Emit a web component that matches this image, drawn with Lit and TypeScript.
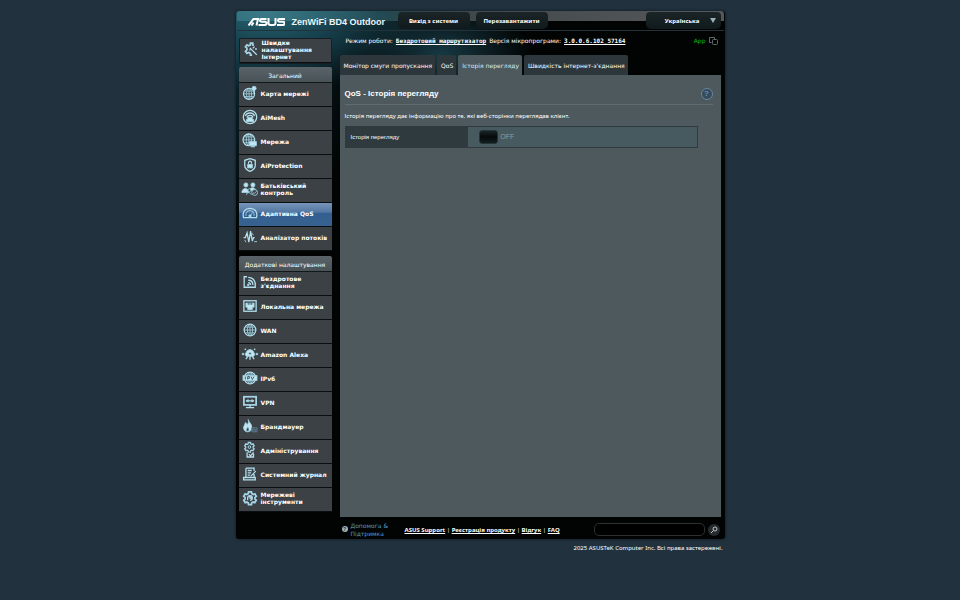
import { LitElement, html, svg, css, nothing } from "lit";
import { customElement, property } from "lit/decorators.js";
import { classMap } from "lit/directives/class-map.js";

const globe = svg`<circle class="thick" cx="12" cy="12" r="10"/><ellipse cx="12" cy="12" rx="4.5" ry="9.5"/><path d="M12 2.5v19M2.5 12h19M4.5 7h15M4.5 17h15"/>`;
const gear = svg`<path d="M9.500 2.500h5l.5 3 2.500 1.400 2.800-1.100 2.500 4.300-2.300 1.900v2.900l2.300 1.900-2.500 4.300-2.800-1.100-2.500 1.400-.5 3h-5l-.5-3L6.500 20l-2.800 1.100-2.500-4.300 2.300-1.900V12L1.200 10.100l2.500-4.300 2.800 1.100L9 5.500z" transform="translate(0 -1)"/>`;

const icons: Record<string, unknown> = {
  wizard: svg`<path class="heavy" d="M17 6l-2-1V2h-4v3L8 6.500 5 5 2.500 8.500 5 10.500v3L2.500 16 5 19.500 8 18l3 1.500v3h3"/><path class="thick" d="M13 13l9 9M10 10l3 3M18 8l-3 3M19 12h3M9 14l2-1"/>`,
  map: svg`<g transform="translate(-1 2) scale(.95)">${globe}</g><circle class="solid" cx="19" cy="4" r="3.500"/><path class="thick" d="M19 5v8"/>`,
  mesh: svg`<circle class="thick" cx="12" cy="12" r="11.500"/><path class="thick" d="M6.500 13a6 6 0 0 1 11 0M4 10a9 9 0 0 1 16 0"/><path class="solid" d="M8 13h8v3h2v4H6v-4h2z"/>`,
  network: svg`<g transform="translate(-2 -2)">${globe}</g><path class="solid" d="M11 13h12v7H11zM14 21h6v1h-6z"/>`,
  shield: svg`<path class="thick" d="M12 1L21 4v9c0 5-4 8-9 10C7 21 3 18 3 13V4z"/><rect class="solid" x="8" y="11" width="8" height="6"/><path class="thick" d="M9.500 10V8a2.500 2.500 0 0 1 5 0v2"/>`,
  family: svg`<circle class="solid" cx="5" cy="5" r="3.500"/><circle class="solid" cx="17" cy="5" r="3.500"/><path class="solid" d="M-2 18c0-9 12-9 12 0zM12 12c3-4 10-2 10 3h-9z"/><circle class="dark" cx="11" cy="14" r="2.500"/><circle class="dark" cx="20" cy="18" r="5"/><path d="M17 18l2 2 4-4M6 22c0-5 8-5 8 0"/>`,
  gauge: svg`<path class="thick" d="M1 20C-2 10 4 4 12 4s14 6 11 16z"/><path d="M5 17C4 11 8 8 12 8s8 3 7 9M12 17l5-6"/><circle class="solid" cx="12" cy="17" r="2"/>`,
  pulse: svg`<path class="thick" d="M1 13h3l3-8 3 16 3-19 3 17 2-6h2"/><path d="M3 17l2 4M15 5l3 4M19 20h5"/>`,
  wifi: svg`<path class="thick" d="M7 3H2v18h19v-6"/><path class="thick" d="M9 4c7 0 12 5 12 12M9 9c5 0 8 3 8 8M9 13c2.500 0 4 1.500 4 4"/><circle class="solid" cx="9" cy="17" r="1.500"/>`,
  port: svg`<rect class="thick" x="1.500" y="3" width="21" height="18"/><path class="solid" d="M5 7h14v7h-3v4H8v-4H5z"/><path class="cut" d="M9 6v4M12 6v4M15 6v4"/>`,
  globe,
  alexa: svg`<path class="solid" d="M6 9c0-6 12-6 12 0 4 2 2 7-1 7H7c-3 0-5-5-1-7z"/><circle class="solid" cx="0" cy="12" r="1.500"/><circle class="solid" cx="24" cy="12" r="1.500"/><path class="thick" d="M5 5L3 3M19 5l2-2M8 16l-3 5M16 16l3 5M12 16v6"/><circle class="dark" cx="12" cy="11" r="2"/>`,
  ipv6: svg`${globe}<rect class="solid" x="0" y="8" width="24" height="8"/><path class="cut" d="M4 9.500v5M8 14.500v-5h3v3H8M14 9.500l2 5 3-5"/>`,
  vpn: svg`<rect class="heavy" x="1.500" y="3" width="21" height="14"/><path class="thick" d="M12 17v4M5 21.500h14M6 10h12"/><path class="solid" d="M5 10l4-2v4zM19 10l-4-2v4z"/>`,
  fire: svg`<path class="solid" d="M9 1c1 5 6 7 6 13 0 5-3 8-7 8s-7-3-7-7c0-4 3-5 3-9 2 1 3 3 3 4 2-2 3-5 2-9z"/><path class="dark" d="M8 13c2 3 3 4 2 8H6c-2-3 1-4 2-8z"/><path class="dim" d="M15 15h9v7h-9zM15 18.500h9M19 15v3.500M17 18.500V22M21 18.500V22"/>`,
  admin: svg`<g transform="translate(2 -2) scale(.75)"><g class="heavy">${gear}</g><circle class="thick" cx="12" cy="12" r="3"/></g><path class="thick" d="M7 16v8h11v-6M10 19l3 3 5-6"/>`,
  log: svg`<path class="thick" d="M5 2h14v5M5 2v15M1 18v4h20v-4zM8 6h7M8 10h6M8 14h4"/><path class="thick" d="M22 7l-9 9M19 12v5"/>`,
  tools: svg`<g class="heavy">${gear}</g><path class="thick" d="M8 16v-4a4 4 0 1 1 4 4M12 9v3h3"/>`,
};

interface Entry { icon: string; label: string; active?: boolean }

const general: Entry[] = [
  { icon: "map", label: "Карта мережі" },
  { icon: "mesh", label: "AiMesh" },
  { icon: "network", label: "Мережа" },
  { icon: "shield", label: "AiProtection" },
  { icon: "family", label: "Батьківський контроль" },
  { icon: "gauge", label: "Адаптивна QoS", active: true },
  { icon: "pulse", label: "Аналізатор потоків" },
];

const advanced: Entry[] = [
  { icon: "wifi", label: "Бездротове з'єднання" },
  { icon: "port", label: "Локальна мережа" },
  { icon: "globe", label: "WAN" },
  { icon: "alexa", label: "Amazon Alexa" },
  { icon: "ipv6", label: "IPv6" },
  { icon: "vpn", label: "VPN" },
  { icon: "fire", label: "Брандмауер" },
  { icon: "admin", label: "Адміністрування" },
  { icon: "log", label: "Системний журнал" },
  { icon: "tools", label: "Мережеві інструменти" },
];

@customElement("nav-item")
class NavItem extends LitElement {
  @property() icon = "";
  @property() label = "";
  @property({ type: Boolean }) active = false;

  static styles = css`
    :host { display: block; }
    .item {
      box-sizing: border-box;
      height: 24px;
      display: flex;
      align-items: center;
      gap: 4px;
      padding: 0 3px 3px 4px;
      border-bottom: 1px solid #0b0e10;
      background: #3b4144;
      color: #fff;
      font: bold 6px/7px "DejaVu Sans", sans-serif;
      text-decoration: none;
    }
    .active { background: linear-gradient(#7794b8, #5377a3 40%, #335f91 45%, #37628f); }
    svg {
      flex: none;
      width: 14px;
      height: 14px;
      overflow: visible;
      fill: none;
      stroke: #9fd2e4;
      stroke-width: 1.5;
    }
    .thick { stroke-width: 2.2; stroke: #b4e0ee; }
    .heavy { stroke-width: 3; stroke: #a4d4e6; }
    .solid { fill: #c2e6f1; }
    .dark { fill: #3b4144; }
    .cut { stroke: #35505e; }
    .dim { stroke: #5c7f90; }
  `;

  render() {
    return html`<a href="#" class=${classMap({ item: true, active: this.active })}
      aria-current=${this.active ? "page" : nothing}>
      <svg viewBox="0 0 24 24" aria-hidden="true">${icons[this.icon]}</svg>
      <span>${this.label}</span>
    </a>`;
  }
}

@customElement("app-root")
class AppRoot extends LitElement {
  static styles = css`
    :host {
      display: block;
      box-sizing: border-box;
      min-height: 100vh;
      padding: 11px 16px;
      background: #21323e;
      color: #fff;
      font: 6px/8px "DejaVu Sans", sans-serif;
    }
    a { color: inherit; }
    button, input, select { font: inherit; color: inherit; margin: 0; }
    .page { max-width: 489px; margin: 0 auto; }
    .frame {
      border-radius: 3px;
      background:
        radial-gradient(ellipse 170px 80px at 30px 0, #2b6574 0, #174350 40%, transparent 100%),
        radial-gradient(ellipse 90px 60px at 205px 44px, #173943, transparent),
        radial-gradient(ellipse 140px 230px at 0 0, #0e2f3b 0, transparent 100%),
        #020404;
      box-shadow: 0 0 3px #0b151b;
      padding: 0 3px;
    }
    .top {
      height: 19px;
      display: flex;
      align-items: flex-start;
      gap: 6px;
      margin: 0 -2px;
      padding: 0 3px 0 11px;
      border-bottom: 1px solid #24333a;
      background: linear-gradient(90deg, #55a0ad66, #447e8a66 30%, #43494c 50%, #55585a) 0 0 / 100% 10px no-repeat;
      border-radius: 3px 3px 0 0;
    }
    .brand {
      flex: none;
      width: 144px;
      display: flex;
      align-items: center;
      gap: 7px;
      padding-top: 5px;
    }
    .logo { width: 37px; height: 8px; fill: none; stroke: #fff; stroke-width: 2; }
    .model { font: bold 9px/12px "Liberation Sans", sans-serif; white-space: nowrap; color: #eef6f8; }
    .pill {
      height: 17px;
      margin-top: 1px;
      border: 0;
      border-radius: 4px 4px 5px 5px;
      background: linear-gradient(#1b2528, #10191c);
      font: bold 6px/16px "Noto Sans", sans-serif;
      padding: 1px 0 0;
      width: 72px;
      text-align: center;
    }
    .lang { position: relative; margin-left: auto; }
    .lang select {
      appearance: none;
      width: 75px;
      padding: 1px 18px 0 16px;
      display: block;
    }
    .lang svg { position: absolute; right: 5px; top: 7px; width: 6px; height: 5px; fill: #9ab0b8; }
    .body { display: grid; grid-template-columns: 93px minmax(0, 1fr); gap: 8px; }
    .side { padding-top: 7px; }
    .quick { border: 1px solid #171e21; border-radius: 1px; margin-bottom: 3px; }
    .group { margin: 0 0 5px; }
    h2 {
      margin: 0;
      height: 16px;
      box-sizing: border-box;
      border-bottom: 1px solid #12181a;
      border-radius: 2px 2px 0 0;
      background: linear-gradient(#5a6468, #495357);
      font: 6px/17px "DejaVu Sans", sans-serif;
      text-align: center;
      white-space: nowrap;
    }
    .main { display: flex; flex-direction: column; }
    .info {
      display: flex;
      align-items: center;
      height: 12px;
      margin-top: 4px;
      padding: 0 4px 0 6px;
      gap: 3px;
      white-space: nowrap;
    }
    .info a { font: bold 6px/8px "DejaVu Sans Mono", monospace; }
    .links a { font-weight: bold; }
    .app { margin-left: auto; color: #16bd16; }
    .info svg { width: 9px; height: 8px; fill: none; stroke: #5d6a6e; }
    .tabs { display: flex; gap: 2px; height: 20px; margin-top: 8px; }
    .tab {
      border: 0;
      border-radius: 2px 2px 0 0;
      padding: 1px 3px 0 4px;
      background: #2d373b;
      font: 6px/19px "DejaVu Sans", sans-serif;
      white-space: nowrap;
    }
    .tab.on { background: #4d595d; color: #d8edf3; }
    .panel {
      flex: 1;
      margin-right: 1px;
      padding: 12px 8px 12px 5px;
      background: #4d595d;
      font: 6px/8px "Liberation Sans", sans-serif;
    }
    .title {
      display: flex;
      align-items: center;
      justify-content: space-between;
      height: 13px;
      padding-bottom: 4px;
      border-bottom: 1px solid #606c70;
    }
    h1 { margin: 0; font: bold 8px/12px "Liberation Sans", sans-serif; }
    .help {
      width: 12px;
      height: 12px;
      padding: 0;
      border: 1px solid #6489a0;
      border-radius: 50%;
      background: #37495a;
      color: #5f90b2;
      font: bold 8px/9px "Liberation Sans", sans-serif;
    }
    .note { margin: 7px 0 5px; height: 9px; font: 6px/9px "Noto Sans", sans-serif; }
    .row {
      display: flex;
      height: 20px;
      border: 1px solid #303a3e;
      margin-right: 15px;
      background: #475a5f;
    }
    .row label {
      flex: 0 0 35%;
      box-sizing: border-box;
      padding-left: 5px;
      line-height: 20px;
      background: #2f3a3e;
    }
    .switch { display: flex; align-items: center; margin-left: 11px; }
    .switch input {
      appearance: none;
      width: 19px;
      height: 14px;
      border: 1px solid #26343a;
      border-radius: 3px;
      background: linear-gradient(#192427, #05090a 50%, #131e21);
    }
    .switch span { font: 7px/14px "Liberation Sans", sans-serif; color: #929da0; padding: 0 2px; }
    .foot { display: flex; align-items: center; height: 22px; padding: 0 2px 0 103px; white-space: nowrap; }
    .q {
      width: 6px; height: 6px; margin: 2px 3px 0 0; border-radius: 50%;
      background: #9fb4bc; color: #10181c; font: bold 5px/6px "Liberation Sans", sans-serif; text-align: center;
    }
    .support { width: 54px; color: #569ac9; line-height: 8px; white-space: normal; padding-top: 4px; }
    .links { padding-top: 4px; font: 6px/8px "Noto Sans", sans-serif; }
    .search { display: flex; align-items: center; gap: 3px; margin: 3px 0 0 auto; }
    .search input {
      box-sizing: border-box; width: 111px; height: 13px; padding: 0 5px;
      border: 1px solid #2c3031; border-radius: 5px; background: #000;
    }
    .search button {
      width: 12px; height: 12px; padding: 2px; border: 0; border-radius: 50%; background: #262b2d;
    }
    .search svg { display: block; width: 8px; height: 8px; fill: none; stroke: #bfc5c7; }
    .copy { margin: 4px 2px 0; text-align: right; font: 6px/10px "Noto Sans", sans-serif; }
  `;

  private items(list: Entry[]) {
    return list.map((e) => html`<nav-item icon=${e.icon} label=${e.label} ?active=${e.active}></nav-item>`);
  }

  render() {
    return html`
      <div class="page">
        <div class="frame">
          <header class="top">
            <div class="brand">
              <svg class="logo" viewBox="0 0 37 8" role="img" aria-label="ASUS">
                <path d="M.5 7.500L5.500 1H10L8.500 7.500M3.500 7.500l2-3M18.500 1h-5c-2 0-2 2.700 0 2.700H17c2 0 2 3.300 0 3.300h-6.500M20.500 0v5c0 1.400.6 2 2 2h3c1.400 0 2-.6 2-2V0M37 1h-5.500c-2 0-2 2.700 0 2.700H35c2 0 2 3.300 0 3.300h-6"/>
              </svg>
              <span class="model">ZenWiFi BD4 Outdoor</span>
            </div>
            <button class="pill">Вихід з системи</button>
            <button class="pill">Перезавантажити</button>
            <div class="lang">
              <select class="pill" aria-label="Мова"><option>Українська</option></select>
              <svg viewBox="0 0 6 5" aria-hidden="true"><path d="M0 0h6L3 5z"/></svg>
            </div>
          </header>
          <div class="body">
            <nav class="side">
              <nav-item class="quick" icon="wizard" label="Швидке налаштування Інтернет"></nav-item>
              <section class="group"><h2>Загальний</h2>${this.items(general)}</section>
              <section class="group"><h2>Додаткові налаштування</h2>${this.items(advanced)}</section>
            </nav>
            <main class="main">
              <div class="info">
                <span>Режим роботи:</span>
                <a href="#">Бездротовий маршрутизатор</a>
                <span>Версія мікропрограми:</span>
                <a href="#">3.0.0.6.102_57164</a>
                <span class="app">App</span>
                <svg viewBox="0 0 9 8" aria-hidden="true"><path d="M2.500 5.500h-2v-5h5v2"/><rect x="3.500" y="2.500" width="5" height="5" rx="1"/></svg>
              </div>
              <div class="tabs">
                <button class="tab">Монітор смуги пропускання</button>
                <button class="tab">QoS</button>
                <button class="tab on">Історія перегляду</button>
                <button class="tab">Швидкість інтернет-з'єднання</button>
              </div>
              <div class="panel">
                <div class="title"><h1>QoS - Історія перегляду</h1><button class="help" aria-label="Довідка">?</button></div>
                <p class="note">Історія перегляду дає інформацію про те, які веб-сторінки переглядав клієнт.</p>
                <div class="row">
                  <label for="history">Історія перегляду</label>
                  <div class="switch"><input id="history" type="checkbox" role="switch"><span>OFF</span></div>
                </div>
              </div>
            </main>
          </div>
          <footer class="foot">
            <span class="q">?</span>
            <span class="support">Допомога &amp;<br>Підтримка</span>
            <span class="links"><a href="#">ASUS Support</a> | <a href="#">Реєстрація продукту</a> | <a href="#">Відгук</a> | <a href="#">FAQ</a></span>
            <form class="search">
              <input type="text" aria-label="Пошук">
              <button type="button" aria-label="Знайти"><svg viewBox="0 0 8 8"><circle cx="5" cy="3" r="2"/><path d="M3.500 4.500L1 7"/></svg></button>
            </form>
          </footer>
        </div>
        <p class="copy">2025 ASUSTeK Computer Inc. Всі права застережені.</p>
      </div>
    `;
  }
}
